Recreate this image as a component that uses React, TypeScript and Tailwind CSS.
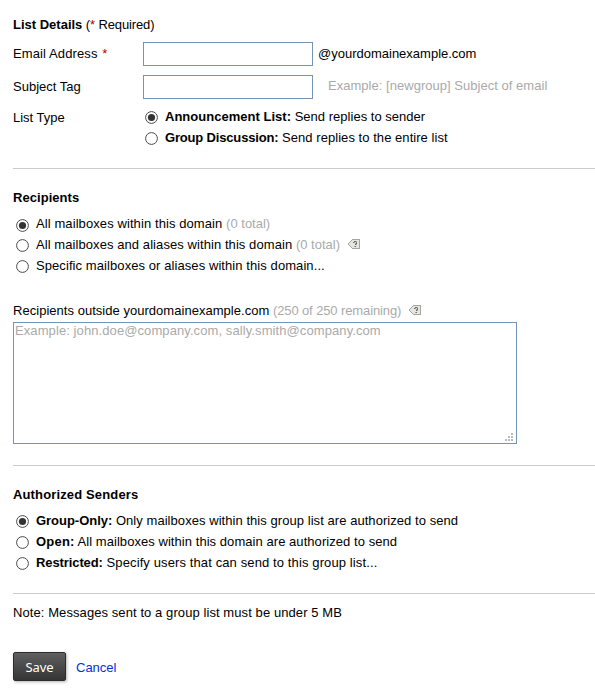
import React from "react";

function Radio({ checked = false, className = "" }: { checked?: boolean; className?: string }) {
  return (
    <svg width="13" height="13" viewBox="0 0 13 13" className={`shrink-0 ${className}`}>
      <circle cx="6.5" cy="6.5" r="5.9" fill="#fff" stroke="#4a4a4a" strokeWidth="1" />
      {checked && <circle cx="6.5" cy="6.5" r="3.6" fill="#333" />}
    </svg>
  );
}

function Hint({ className = "" }: { className?: string }) {
  return (
    <svg width="12" height="10" viewBox="0 0 12 10" shapeRendering="crispEdges" className={`shrink-0 ${className}`}>
      <path d="M4 0H12V10H4V9H3V8H2V7H1V6H0V4H1V3H2V2H3V1H4Z" fill="#a6a6a0" />
      <path d="M4 1H11V9H4V8H3V7H2V6H1V4H2V3H3V2H4Z" fill="#e6e6e1" />
      <path d="M6 2H8V3H6ZM5 3H6V4H5ZM8 3H9V4H8ZM8 4H9V5H8ZM7 5H8V6H7ZM7 7H8V8H7Z" fill="#6e6e68" />
      <path d="M8 2H9V3H8ZM6 3H7V4H6ZM7 4H8V5H7ZM8 5H9V6H8ZM6 7H7V8H6Z" fill="#a2a29c" />
    </svg>
  );
}

function Grip() {
  return (
    <svg width="8" height="8" viewBox="0 0 8 8" shapeRendering="crispEdges" className="absolute right-[3px] bottom-[2px]">
      <path d="M6 0h2v2H6zM3 3h2v2H3zM6 3h2v2H6zM0 6h2v2H0zM3 6h2v2H3zM6 6h2v2H6z" fill="#bcbcbc" />
    </svg>
  );
}

const muted = "text-[#aaa]";

export default function App() {
  return (
    <main className="h-[688px] w-[595px] overflow-hidden bg-white pt-[17px] pl-[13px] font-['Liberation_Sans',Arial,sans-serif] text-[13px] leading-[15px] whitespace-pre text-black">
      <section className="h-[151px]">
        <h2 className="h-[15px] tracking-[-0.13px]"><b className="tracking-normal">List Details</b> (<span className="text-[#b00]">*</span> Required)</h2>
        <div className="mt-[10px] flex h-[24px]">
          <label className="w-[130px] pt-[4px] tracking-[0.11px]">Email Address <span className="ml-px text-[#b00]">*</span></label>
          <input className="h-[24px] w-[170px] border border-[#7494b8] bg-white outline-none" />
          <span className="pt-[4px] pl-[5px]">@yourdomainexample.com</span>
        </div>
        <div className="mt-[9px] flex h-[24px]">
          <label className="w-[130px] pt-[4px]">Subject Tag</label>
          <input className="h-[24px] w-[170px] border border-[#7494b8] bg-white outline-none" />
          <span className={`pt-[3px] pl-[15px] tracking-[0.03px] ${muted}`}>Example: [newgroup] Subject of email</span>
        </div>
        <div className="mt-[10px] flex">
          <span className="w-[132px] pt-px">List Type</span>
          <div>
            <div className="flex h-[21px]"><Radio checked className="mt-[2px] mr-[7px]" /><span className="tracking-[0.02px]"><b>Announcement List:</b> Send replies to sender</span></div>
            <div className="flex h-[21px]"><Radio className="mt-[2px] mr-[7px]" /><span className="tracking-[0.05px]"><b className="tracking-[-0.17px]">Group Discussion:</b> Send replies to the entire list</span></div>
          </div>
        </div>
      </section>
      <section className="h-[297px] border-t border-[#ccc] pt-[21px]">
        <h2 className="h-[26px] font-bold tracking-[0.05px]">Recipients</h2>
        <div className="pl-[3px]">
          <div className="flex h-[21px]"><Radio checked className="mt-[3px] mr-[7px]" /><span className="tracking-[0.09px]">All mailboxes within this domain <span className={`tracking-normal ${muted}`}>(0 total)</span></span></div>
          <div className="flex h-[21px]"><Radio className="mt-[2px] mr-[7px]" /><span className="tracking-[0.075px]">All mailboxes and aliases within this domain <span className={`tracking-normal ${muted}`}>(0 total)</span></span><Hint className="mt-[2px] ml-[8px]" /></div>
          <div className="flex h-[21px]"><Radio className="mt-[2px] mr-[7px]" /><span className="tracking-[0.08px]">Specific mailboxes or aliases within this domain...</span></div>
        </div>
        <div className="mt-[24px] flex h-[19px]"><span className="tracking-[0.03px]">Recipients outside yourdomainexample.com <span className={`tracking-[-0.11px] ${muted}`}>(250 of 250 remaining)</span></span><Hint className="mt-[2px] ml-[8px]" /></div>
        <div className="relative h-[122px] w-[504px] border border-[#7494b8]">
          <textarea className="block h-full w-full resize-none overflow-hidden pl-px tracking-[0.09px] outline-none placeholder:text-[#aaa]" placeholder="Example: john.doe@company.com, sally.smith@company.com" />
          <Grip />
        </div>
      </section>
      <section className="h-[128px] border-t border-[#ccc] pt-[21px]">
        <h2 className="h-[26px] font-bold tracking-[0.14px]">Authorized Senders</h2>
        <div className="pl-[3px]">
          <div className="flex h-[21px]"><Radio checked className="mt-[2px] mr-[7px]" /><span className="tracking-[0.055px]"><b className="tracking-[-0.03px]">Group-Only:</b> Only mailboxes within this group list are authorized to send</span></div>
          <div className="flex h-[21px]"><Radio className="mt-[2px] mr-[7px]" /><span className="tracking-[0.055px]"><b className="tracking-[0.2px]">Open:</b> All mailboxes within this domain are authorized to send</span></div>
          <div className="flex h-[21px]"><Radio className="mt-[2px] mr-[7px]" /><span className="tracking-[0.115px]"><b className="tracking-[-0.1px]">Restricted:</b> Specify users that can send to this group list...</span></div>
        </div>
      </section>
      <section className="border-t border-[#ccc] pt-[11px]">
        <p className="tracking-[0.083px]">Note: Messages sent to a group list must be under 5 MB</p>
        <div className="mt-[32px] flex">
          <button className="h-[29px] w-[53px] rounded-[2px] border border-[#2d2d2d] bg-linear-to-b from-[#606060] to-[#353535] pt-px font-['Noto_Sans','Open_Sans',sans-serif] text-[13px] leading-[15px] tracking-[-0.1px] text-white shadow-[1px_1px_3px_rgba(0,0,0,0.3)]">Save</button>
          <a className="pt-[8px] pl-[10px] text-[#0033dd]">Cancel</a>
        </div>
      </section>
    </main>
  );
}
